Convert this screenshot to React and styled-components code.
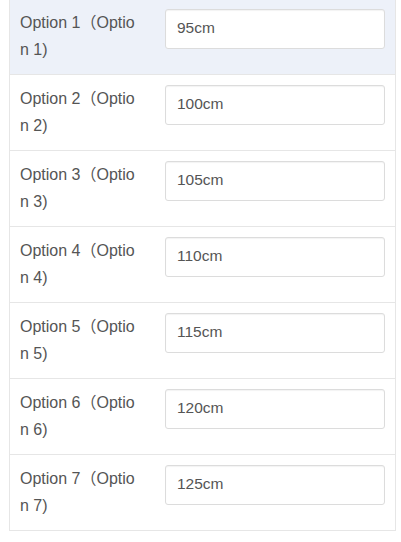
import React from "react";
import styled, { createGlobalStyle } from "styled-components";

const GlobalStyle = createGlobalStyle`
  html, body {
    margin: 0;
    padding: 0;
    background: #fff;
  }
  body {
    font-family: "Liberation Sans", Arial, "Noto Sans CJK SC", sans-serif;
  }
`;

const Page = styled.div`
  padding: 0 5px 0 9px;
`;

const Table = styled.table`
  width: 387px;
  margin-top: -2px;
  border-collapse: collapse;
  border: 1px solid #e6e6e6;
  table-layout: fixed;
`;

const Row = styled.tr`
  background: ${(props) => (props.$active ? "#edf1f9" : "#fff")};
  border-top: 1px solid #e6e6e6;
`;

const Label = styled.td`
  width: 118px;
  height: 54px;
  padding: 10px 17px 11px 10px;
  vertical-align: top;
  color: #555;
  font-size: 16px;
  line-height: 27px;
  word-break: break-all;
`;

const ValueCell = styled.td`
  padding: 10px 10px 11px 10px;
  vertical-align: top;
`;

const SizeInput = styled.input`
  box-sizing: border-box;
  width: 100%;
  height: 40px;
  padding: 0 11px 2px;
  border: 1px solid #dcdcdc;
  border-radius: 3px;
  box-shadow: inset 0 1px 1px rgba(0, 0, 0, 0.05);
  background: #fff;
  color: #555;
  font-family: inherit;
  font-size: 15.5px;
  outline: none;
`;

const options = [
  { n: 1, size: "95cm" },
  { n: 2, size: "100cm" },
  { n: 3, size: "105cm" },
  { n: 4, size: "110cm" },
  { n: 5, size: "115cm" },
  { n: 6, size: "120cm" },
  { n: 7, size: "125cm" },
];

const App = () => {
  return (
    <Page>
      <GlobalStyle />
      <Table>
        <tbody>
          {options.map((o) => (
            <Row key={o.n} $active={o.n === 1}>
              <Label>{`Option ${o.n}（Option ${o.n})`}</Label>
              <ValueCell>
                <SizeInput type="text" defaultValue={o.size} />
              </ValueCell>
            </Row>
          ))}
        </tbody>
      </Table>
    </Page>
  );
};

export default App;
